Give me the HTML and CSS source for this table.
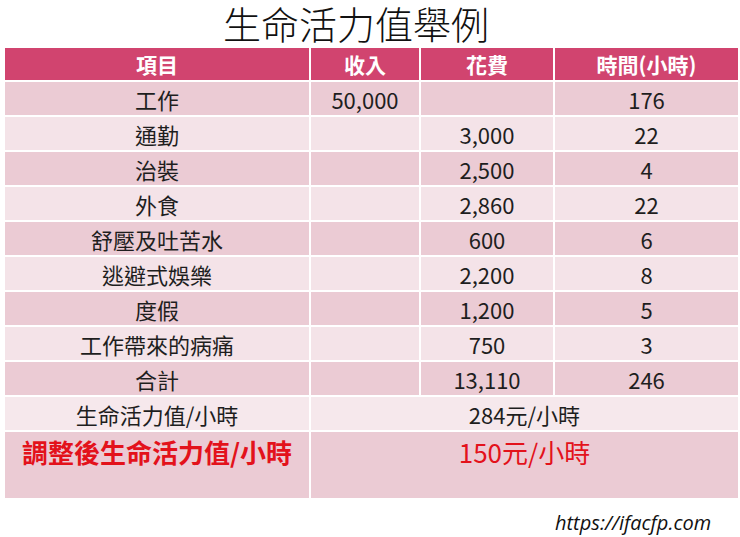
FILE: index.html
```html
<!DOCTYPE html>
<html lang="zh-Hant">
<head>
<meta charset="utf-8">
<title>生命活力值舉例</title>
<link rel="stylesheet" href="styles.css">
</head>
<body>
<h1 class="title">生命活力值舉例</h1>
<table class="grid">
  <colgroup>
    <col class="c1"><col class="c2"><col class="c3"><col class="c4">
  </colgroup>
  <thead>
    <tr class="head"><th>項目</th><th>收入</th><th>花費</th><th>時間(小時)</th></tr>
  </thead>
  <tbody>
    <tr class="dark"><td>工作</td><td>50,000</td><td></td><td>176</td></tr>
    <tr class="light"><td>通勤</td><td></td><td>3,000</td><td>22</td></tr>
    <tr class="dark"><td>治裝</td><td></td><td>2,500</td><td>4</td></tr>
    <tr class="light"><td>外食</td><td></td><td>2,860</td><td>22</td></tr>
    <tr class="dark"><td>舒壓及吐苦水</td><td></td><td>600</td><td>6</td></tr>
    <tr class="light"><td>逃避式娛樂</td><td></td><td>2,200</td><td>8</td></tr>
    <tr class="dark"><td>度假</td><td></td><td>1,200</td><td>5</td></tr>
    <tr class="light"><td>工作帶來的病痛</td><td></td><td>750</td><td>3</td></tr>
    <tr class="dark"><td>合計</td><td></td><td>13,110</td><td>246</td></tr>
    <tr class="lighter"><td>生命活力值/小時</td><td colspan="3">284元/小時</td></tr>
    <tr class="dark tall"><td class="red-bold">調整後生命活力值/小時</td><td colspan="3" class="red">150元/小時</td></tr>
  </tbody>
</table>
<div class="url">https://ifacfp.com</div>
</body>
</html>
```
FILE: styles.css
```css
html, body {
  margin: 0;
  padding: 0;
  background: #ffffff;
}
body {
  width: 740px;
  height: 537px;
  overflow: hidden;
  font-family: "Noto Sans CJK TC", "Noto Sans", sans-serif;
  color: #1e1e1e;
}
.title {
  margin: 0;
  height: 48px;
  line-height: 46px;
  font-size: 38px;
  font-weight: 300;
  text-align: center;
  padding-right: 28px;
  color: #111;
}
.grid {
  margin-left: 3px;
  width: 735px;
  border-collapse: collapse;
  table-layout: fixed;
}
.c1 { width: 306px; }
.c2 { width: 110px; }
.c3 { width: 134px; }
.c4 { width: 185px; }
.grid th, .grid td {
  border: 2px solid #ffffff;
  padding: 0;
  text-align: center;
  font-size: 22px;
  line-height: 24px;
  font-weight: 400;
}
.grid th {
  height: 32px;
  background: #d1446f;
  color: #ffffff;
  font-weight: 700;
  font-size: 21px;
  border-top: none;
}
.grid td { height: 33px; }
.dark td { background: #ebcbd4; }
.light td { background: #f4e3e8; }
.lighter td { background: #f6e8ec; }
.grid .tall td {
  height: 60px;
  vertical-align: top;
  padding-top: 6px;
}
.grid td.red-bold {
  color: #e3121b;
  font-weight: 700;
  font-size: 26px;
  line-height: 28px;
}
.grid td.red {
  color: #e3121b;
  font-size: 26px;
  line-height: 28px;
}
.url {
  margin-top: 10px;
  padding-left: 555px;
  font-family: "Open Sans", "Liberation Sans", sans-serif;
  font-style: italic;
  font-size: 20px;
  line-height: 26px;
  color: #111;
}
```
